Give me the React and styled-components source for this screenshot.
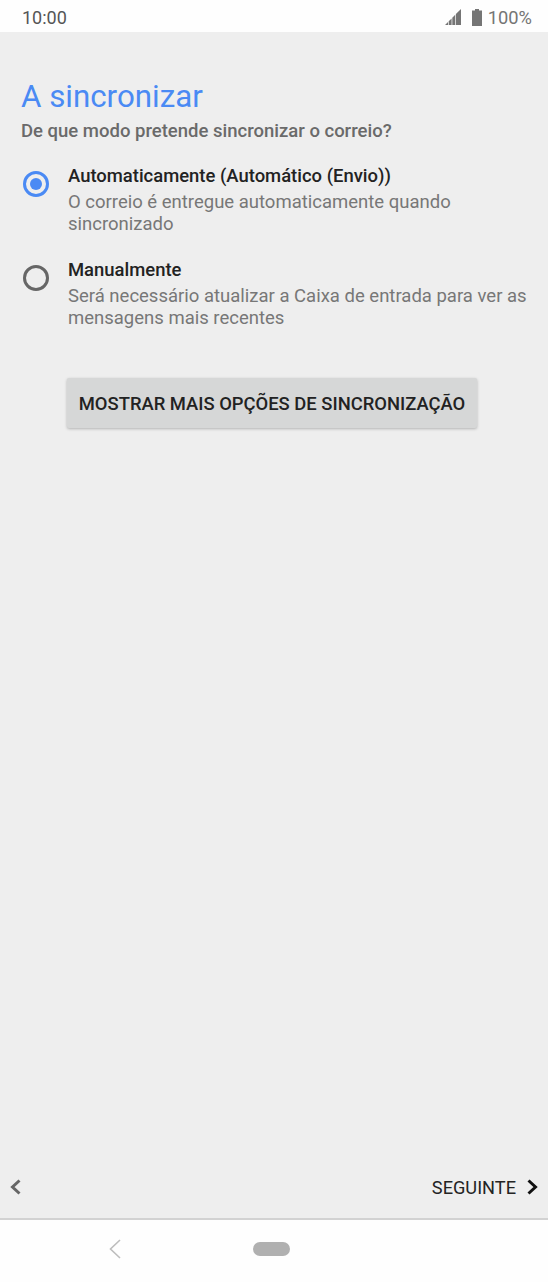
import React from 'react';
import styled, { createGlobalStyle } from 'styled-components';

const GlobalStyle = createGlobalStyle`
  html, body { margin: 0; padding: 0; background: #eeeeee; }
  body { font-family: Roboto, "Liberation Sans", sans-serif; }
`;

const Screen = styled.div`
  width: 548px;
  height: 1282px;
  display: flex;
  flex-direction: column;
  background: #eeeeee;
  overflow: hidden;
`;

const StatusBar = styled.div`
  height: 32px;
  flex: none;
  display: flex;
  align-items: center;
  justify-content: space-between;
  padding: 2px 16px 0 22px;
  box-sizing: border-box;
  background: #fefefe;
  color: #555555;
  font-size: 18px;
`;

const StatusRight = styled.div`
  display: flex;
  align-items: center;
  gap: 6px;
  color: #757575;
  font-size: 18.3px;
`;

const SignalIcon = styled.svg`
  margin-right: 5px;
`;

const Content = styled.div`
  flex: 1;
  padding: 45px 21px 0;
`;

const Title = styled.h1`
  margin: 0;
  font-size: 31.3px;
  font-weight: 400;
  line-height: 40px;
  color: #4a8af4;
`;

const Subtitle = styled.p`
  margin: 3px 0 0;
  font-size: 18.5px;
  font-weight: 500;
  line-height: 22px;
  color: #6a6a6a;
`;

const Options = styled.div`
  margin-top: 22px;
  display: flex;
  flex-direction: column;
  gap: 23px;
`;

const Option = styled.div`
  display: flex;
  gap: 19px;
`;

const Radio = styled.span`
  flex: none;
  box-sizing: border-box;
  width: 26px;
  height: 26px;
  margin: 7px 0 0 2px;
  border-radius: 50%;
  border: 3px solid ${(p) => (p.$checked ? '#4a8af4' : '#666666')};
  display: flex;
  align-items: center;
  justify-content: center;

  &::after {
    content: '';
    display: ${(p) => (p.$checked ? 'block' : 'none')};
    width: 12px;
    height: 12px;
    border-radius: 50%;
    background: #4a8af4;
  }
`;

const OptionTitle = styled.div`
  font-size: 18.45px;
  line-height: 24px;
  font-weight: 500;
  color: #222222;
`;

const OptionText = styled.div`
  margin-top: 3px;
  font-size: 18.5px;
  line-height: 22px;
  color: #777777;
`;

const MoreButton = styled.button`
  display: block;
  margin: 49px 0 0 46px;
  width: 410px;
  height: 50px;
  padding: 0;
  border: 0;
  border-radius: 2px;
  background: #d6d7d7;
  box-shadow: 0 1px 3px rgba(0, 0, 0, 0.25);
  font-family: inherit;
  font-size: 18.4px;
  font-weight: 500;
  color: #222222;
`;

const Footer = styled.div`
  height: 64px;
  flex: none;
  box-sizing: border-box;
  display: flex;
  align-items: center;
  justify-content: space-between;
  padding: 0 9px;
  border-bottom: 2px solid #d2d2d2;
`;

const NextLink = styled.div`
  display: flex;
  align-items: center;
  gap: 10px;
  font-size: 18.2px;
  font-weight: 400;
  color: #242424;
`;

const NavBar = styled.div`
  height: 62px;
  flex: none;
  box-sizing: border-box;
  display: flex;
  align-items: center;
  background: #fefefe;
  padding: 0 0 4px 108px;
`;

const HomePill = styled.span`
  width: 37px;
  height: 14px;
  margin-left: 131px;
  border-radius: 7px;
  background: #b0b0b0;
`;

const Chevron = ({ dir, color, width = 3 }) => (
  <svg width="13" height="20" viewBox="0 0 13 20" fill="none">
    <path
      d={dir === 'left' ? 'M10.5 3.5 L3.5 10 L10.5 16.5' : 'M2.5 3.5 L9.5 10 L2.5 16.5'}
      stroke={color}
      strokeWidth={width}
    />
  </svg>
);

export default function App() {
  return (
    <Screen>
      <GlobalStyle />
      <StatusBar>
        <span>10:00</span>
        <StatusRight>
          <SignalIcon width="16" height="16" viewBox="0 0 16 16" fill="#757575">
            <path d="M0 16 L3 13 V16Z M3.7 12.3 L6.6 9.4 V16 H3.7Z M7.3 8.7 L10.2 5.8 V16 H7.3Z M10.9 5.1 L16 0 V16 H10.9Z" />
          </SignalIcon>
          <svg width="10" height="17" viewBox="0 0 10 17" fill="#757575">
            <path d="M3 0 H7 V1.5 H10 V17 H0 V1.5 H3Z" />
          </svg>
          <span>100%</span>
        </StatusRight>
      </StatusBar>

      <Content>
        <Title>A sincronizar</Title>
        <Subtitle>De que modo pretende sincronizar o correio?</Subtitle>
        <Options>
          <Option>
            <Radio $checked />
            <div>
              <OptionTitle>Automaticamente (Automático (Envio))</OptionTitle>
              <OptionText>O correio é entregue automaticamente quando sincronizado</OptionText>
            </div>
          </Option>
          <Option>
            <Radio />
            <div>
              <OptionTitle>Manualmente</OptionTitle>
              <OptionText>Será necessário atualizar a Caixa de entrada para ver as mensagens mais recentes</OptionText>
            </div>
          </Option>
        </Options>
        <MoreButton>MOSTRAR MAIS OPÇÕES DE SINCRONIZAÇÃO</MoreButton>
      </Content>

      <Footer>
        <Chevron dir="left" color="#666666" />
        <NextLink>
          SEGUINTE
          <Chevron dir="right" color="#111111" />
        </NextLink>
      </Footer>

      <NavBar>
        <svg width="14" height="22" viewBox="0 0 14 22" fill="none">
          <path d="M12 2 L2.5 11 L12 20" stroke="#bdbdbd" strokeWidth="1.6" />
        </svg>
        <HomePill />
      </NavBar>
    </Screen>
  );
}
